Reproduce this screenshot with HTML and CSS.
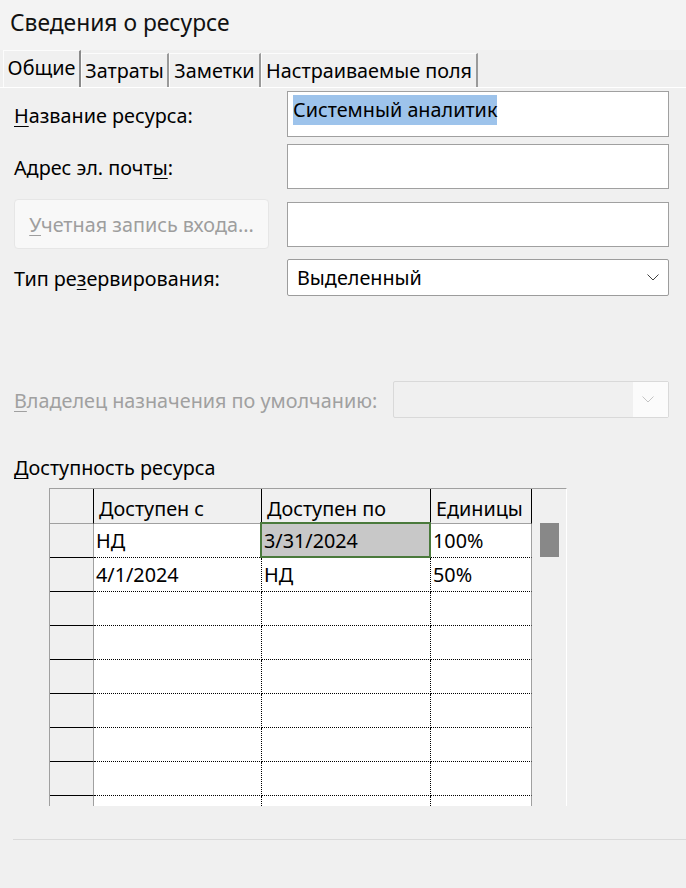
FILE: index.html
```html
<!DOCTYPE html>
<html lang="ru">
<head>
<meta charset="utf-8">
<title>Сведения о ресурсе</title>
<link rel="stylesheet" href="styles.css">
</head>
<body>
<div class="window">
  <header class="title">Сведения о ресурсе</header>
  <nav class="tabs">
    <div class="tab tab-active tab-general">Общие</div>
    <div class="tab tab-costs">Затраты</div>
    <div class="tab tab-notes">Заметки</div>
    <div class="tab tab-custom">Настраиваемые поля</div>
  </nav>
  <main class="panel">
    <div class="field field-name">
      <label class="lbl"><u>Н</u>азвание ресурса:</label>
      <div class="input input-tall"><span class="selection">Системный аналитик</span></div>
    </div>
    <div class="field field-email">
      <label class="lbl">Адрес эл. почт<u>ы</u>:</label>
      <div class="input"></div>
    </div>
    <div class="field field-login">
      <button class="btn-disabled"><u>У</u>четная запись входа...</button>
      <div class="input"></div>
    </div>
    <div class="field field-booking">
      <label class="lbl">Тип ре<u>з</u>ервирования:</label>
      <div class="select">
        <span class="select-value">Выделенный</span>
        <svg class="chevron" width="12" height="7" viewBox="0 0 12 7"><path d="M0.5 0.5 L6 6 L11.5 0.5" fill="none" stroke="#404040" stroke-width="1"/></svg>
      </div>
    </div>
    <div class="field field-owner">
      <label class="lbl lbl-disabled"><u>В</u>ладелец назначения по умолчанию:</label>
      <div class="select select-disabled">
        <span class="select-fill"></span>
        <span class="select-btn">
          <svg class="chevron" width="12" height="7" viewBox="0 0 12 7"><path d="M0.5 0.5 L6 6 L11.5 0.5" fill="none" stroke="#c4c4c4" stroke-width="1"/></svg>
        </span>
      </div>
    </div>
    <div class="section-label"><u>Д</u>оступность ресурса</div>
    <div class="grid-wrap">
      <div class="grid">
        <div class="c corner"></div>
        <div class="c head">Доступен с</div>
        <div class="c head">Доступен по</div>
        <div class="c head">Единицы</div>

        <div class="c rh"></div>
        <div class="c d">НД</div>
        <div class="c d sel">3/31/2024</div>
        <div class="c d last">100%</div>

        <div class="c rh"></div>
        <div class="c d">4/1/2024</div>
        <div class="c d">НД</div>
        <div class="c d last">50%</div>

        <div class="c rh"></div><div class="c d"></div><div class="c d"></div><div class="c d last"></div>
        <div class="c rh"></div><div class="c d"></div><div class="c d"></div><div class="c d last"></div>
        <div class="c rh"></div><div class="c d"></div><div class="c d"></div><div class="c d last"></div>
        <div class="c rh"></div><div class="c d"></div><div class="c d"></div><div class="c d last"></div>
        <div class="c rh"></div><div class="c d"></div><div class="c d"></div><div class="c d last"></div>
        <div class="c rh"></div><div class="c d"></div><div class="c d"></div><div class="c d last"></div>
        <div class="c rh"></div><div class="c d"></div><div class="c d"></div><div class="c d last"></div>
      </div>
      <div class="vscroll"><div class="thumb"></div></div>
    </div>
    <div class="separator"></div>
  </main>
</div>
</body>
</html>
```

FILE: styles.css
```css
* { box-sizing: border-box; }

html, body {
  margin: 0;
  padding: 0;
  background: #f0f0f0;
}

body {
  font-family: "Noto Sans", "Open Sans", sans-serif;
  color: #000;
  width: 686px;
  height: 888px;
  overflow: hidden;
}

.window {
  display: flex;
  flex-direction: column;
}

.title {
  height: 50px;
  background: #f3f3f3;
  padding-left: 10px;
  font-size: 22.8px;
  line-height: 46px;
  color: #111;
}

.tabs {
  display: flex;
  align-items: flex-end;
  height: 37px;
  padding-left: 3px;
}

.tab {
  height: 34px;
  font-size: 19.8px;
  line-height: 34px;
  text-align: center;
  border-top: 1px solid #fcfcfc;
  border-left: 1px solid #fcfcfc;
  border-right: 2px solid #9a9a9a;
  white-space: nowrap;
}

.tab-active {
  height: 37px;
  line-height: 33px;
  border-right-color: #8a8a8a;
}

.tab-general { width: 78px; }
.tab-costs { width: 88px; }
.tab-notes { width: 92px; }
.tab-custom { width: 217px; }

.panel {
  border-top: 1px solid #ffffff;
  padding: 3px 17px 0 14px;
  display: flex;
  flex-direction: column;
}

.field {
  display: grid;
  grid-template-columns: 273px 382px;
  align-items: center;
}

.field-email { margin-top: 7px; }
.field-login { margin-top: 10px; }
.field-booking { margin-top: 10px; }
.field-owner {
  margin-top: 85px;
  grid-template-columns: 379px 276px;
}

.lbl {
  font-size: 19.8px;
  line-height: 26px;
  padding-top: 3px;
  color: #000;
  white-space: nowrap;
}

.lbl u, .section-label u, .btn-disabled u {
  text-underline-offset: 3px;
  text-decoration-thickness: 1px;
}

.lbl-disabled {
  color: #a0a0a0;
}

.input {
  height: 45px;
  background: #fff;
  border: 1px solid #a0a0a0;
  padding: 3px 5px 0;
}

.input-tall { height: 46px; }

.selection {
  display: inline-block;
  background: #9dc3eb;
  font-size: 19.8px;
  line-height: 30px;
  color: #000;
}

.btn-disabled {
  width: 255px;
  height: 50px;
  background: #f8f8f8;
  border: 1px solid #e6e6e6;
  border-radius: 4px;
  font-family: inherit;
  font-size: 19.8px;
  color: #9e9e9e;
  padding: 0;
  text-align: center;
  white-space: nowrap;
}

.select {
  height: 37px;
  background: #fff;
  border: 1px solid #9c9c9c;
  border-radius: 2px;
  display: flex;
  align-items: center;
  justify-content: space-between;
  padding: 0 9px 0 9px;
}

.select-value {
  font-size: 19.8px;
  line-height: 26px;
}

.select-disabled {
  background: #f0f0f0;
  border-color: #d9d9d9;
  padding: 0;
  align-items: stretch;
}

.select-fill {
  flex: 1;
  margin: 2px 0;
}

.select-btn {
  width: 35px;
  background: #fbfbfb;
  display: flex;
  align-items: center;
  justify-content: center;
  padding-right: 5px;
}

.section-label {
  margin-top: 37px;
  font-size: 19.8px;
  line-height: 26px;
  white-space: nowrap;
}

.grid-wrap {
  margin-top: 7px;
  margin-left: 35px;
  display: flex;
  height: 318px;
  overflow: hidden;
}

.grid {
  display: grid;
  grid-template-columns: 44px 168px 169px 101px;
  grid-template-rows: 35px repeat(9, 34px);
  border-top: 1px solid #a0a0a0;
  border-left: 1px solid #a0a0a0;
  align-self: flex-start;
}

.c {
  font-size: 19.8px;
  display: flex;
  align-items: center;
  white-space: nowrap;
  overflow: visible;
}

.corner {
  background: #f0f0f0;
  border-right: 1px solid #000;
  border-bottom: 1px solid #a0a0a0;
}

.head {
  background: #f0f0f0;
  border-right: 1px solid #000;
  border-bottom: 1px solid #a0a0a0;
  align-items: flex-end;
  padding: 0 0 0 5px;
  line-height: 28px;
}

.rh {
  background: #f0f0f0;
  border-right: 1px solid #a0a0a0;
  border-bottom: 1px solid #000;
}

.d {
  background: #fff;
  border-right: 1px dotted #000;
  border-bottom: 1px dotted #000;
  padding-left: 2px;
}

.d.last {
  border-right: 1px solid #a0a0a0;
}

.sel {
  position: relative;
  background: #c8c8c8;
}

.sel::after {
  content: "";
  position: absolute;
  left: -2px;
  top: -2px;
  right: -1px;
  bottom: -1px;
  border: 2px solid #4a7a3c;
}

.vscroll {
  width: 35px;
  height: 318px;
  background: #f0f0f0;
  border-top: 1px solid #a0a0a0;
  border-right: 1px solid #ffffff;
  padding: 34px 0 0 8px;
}

.thumb {
  width: 19px;
  height: 34px;
  background: #888888;
}

.separator {
  margin-top: 33px;
  margin-left: -1px;
  margin-right: -17px;
  height: 1px;
  background: #dadada;
}
```
